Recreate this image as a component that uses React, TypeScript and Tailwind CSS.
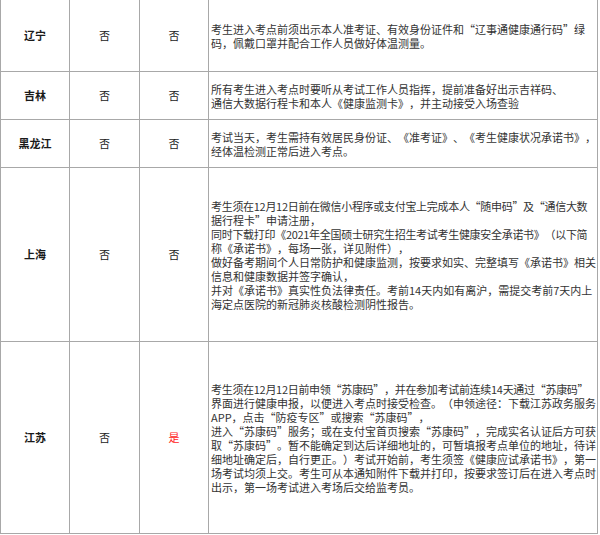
import React from "react";

type Row = {
  name: string;
  a: string;
  b: string;
  bRed?: boolean;
  h: string;
  lines: string[];
  tight?: number[];
};

const rows: Row[] = [
  {
    name: "辽宁",
    a: "否",
    b: "否",
    h: "h-[72px]",
    lines: [
      "考生进入考点前须出示本人准考证、有效身份证件和“辽事通健康通行码”绿",
      "码，佩戴口罩并配合工作人员做好体温测量。",
    ],
  },
  {
    name: "吉林",
    a: "否",
    b: "否",
    h: "h-[48px]",
    lines: [
      "所有考生进入考点时要听从考试工作人员指挥，提前准备好出示吉祥码、",
      "通信大数据行程卡和本人《健康监测卡》，并主动接受入场查验",
    ],
  },
  {
    name: "黑龙江",
    a: "否",
    b: "否",
    h: "h-[48px]",
    lines: [
      "考试当天，考生需持有效居民身份证、《准考证》、《考生健康状况承诺书》，",
      "经体温检测正常后进入考点。",
    ],
  },
  {
    name: "上海",
    a: "否",
    b: "否",
    h: "h-[174px]",
    tight: [0, 2],
    lines: [
      "考生须在12月12日前在微信小程序或支付宝上完成本人“随申码”及“通信大数",
      "据行程卡”申请注册，",
      "同时下载打印《2021年全国硕士研究生招生考试考生健康安全承诺书》（以下简",
      "称《承诺书》，每场一张，详见附件），",
      "做好备考期间个人日常防护和健康监测，按要求如实、完整填写《承诺书》相关",
      "信息和健康数据并签字确认，",
      "并对《承诺书》真实性负法律责任。考前14天内如有离沪，需提交考前7天内上",
      "海定点医院的新冠肺炎核酸检测阴性报告。",
    ],
  },
  {
    name: "江苏",
    a: "否",
    b: "是",
    bRed: true,
    h: "h-[192px]",
    tight: [0],
    lines: [
      "考生须在12月12日前申领“苏康码”，并在参加考试前连续14天通过“苏康码”",
      "界面进行健康申报，以便进入考点时接受检查。（申领途径：下载江苏政务服务",
      "APP，点击“防疫专区”或搜索“苏康码”，",
      "进入“苏康码”服务；或在支付宝首页搜索“苏康码”，完成实名认证后方可获",
      "取“苏康码”。暂不能确定到达后详细地址的，可暂填报考点单位的地址，待详",
      "细地址确定后，自行更正。）考试开始前，考生须签《健康应试承诺书》，第一",
      "场考试均须上交。考生可从本通知附件下载并打印，按要求签订后在进入考点时",
      "出示，第一场考试进入考场后交给监考员。",
    ],
  },
];

export default function App() {
  return (
    <div
      lang="zh-CN"
      className="w-[600px] h-[535px] bg-white overflow-hidden [text-spacing-trim:space-all]"
      style={{ fontFamily: '"Noto Sans CJK SC", "Noto Sans", sans-serif' }}
    >
      <div className="w-[598px] border-l border-[#a8a8a8]">
        {rows.map((r) => (
          <div key={r.name} className={`flex ${r.h} border-b border-[#a8a8a8]`}>
            <div className="w-[69px] shrink-0 border-r border-[#a8a8a8] flex items-center justify-center text-[11px] font-bold text-[#1a1a1a]">
              {r.name}
            </div>
            <div className="w-[70px] shrink-0 border-r border-[#a8a8a8] flex items-center justify-center text-[11px] text-[#222]">
              {r.a}
            </div>
            <div
              className={`w-[69px] shrink-0 border-r border-[#a8a8a8] flex items-center justify-center text-[11px] ${
                r.bRed ? "text-[#ff1a1a]" : "text-[#222]"
              }`}
            >
              {r.b}
            </div>
            <div className="w-[389px] shrink-0 border-r border-[#a8a8a8] flex flex-col justify-center pl-[2px] text-[11px] leading-[14px] text-[#333]">
              {r.lines.map((l, i) => (
                <div
                  key={i}
                  className={`whitespace-nowrap ${
                    r.tight && r.tight.includes(i) ? "tracking-[-0.3px]" : ""
                  }`}
                >
                  {l}
                </div>
              ))}
            </div>
          </div>
        ))}
      </div>
    </div>
  );
}
